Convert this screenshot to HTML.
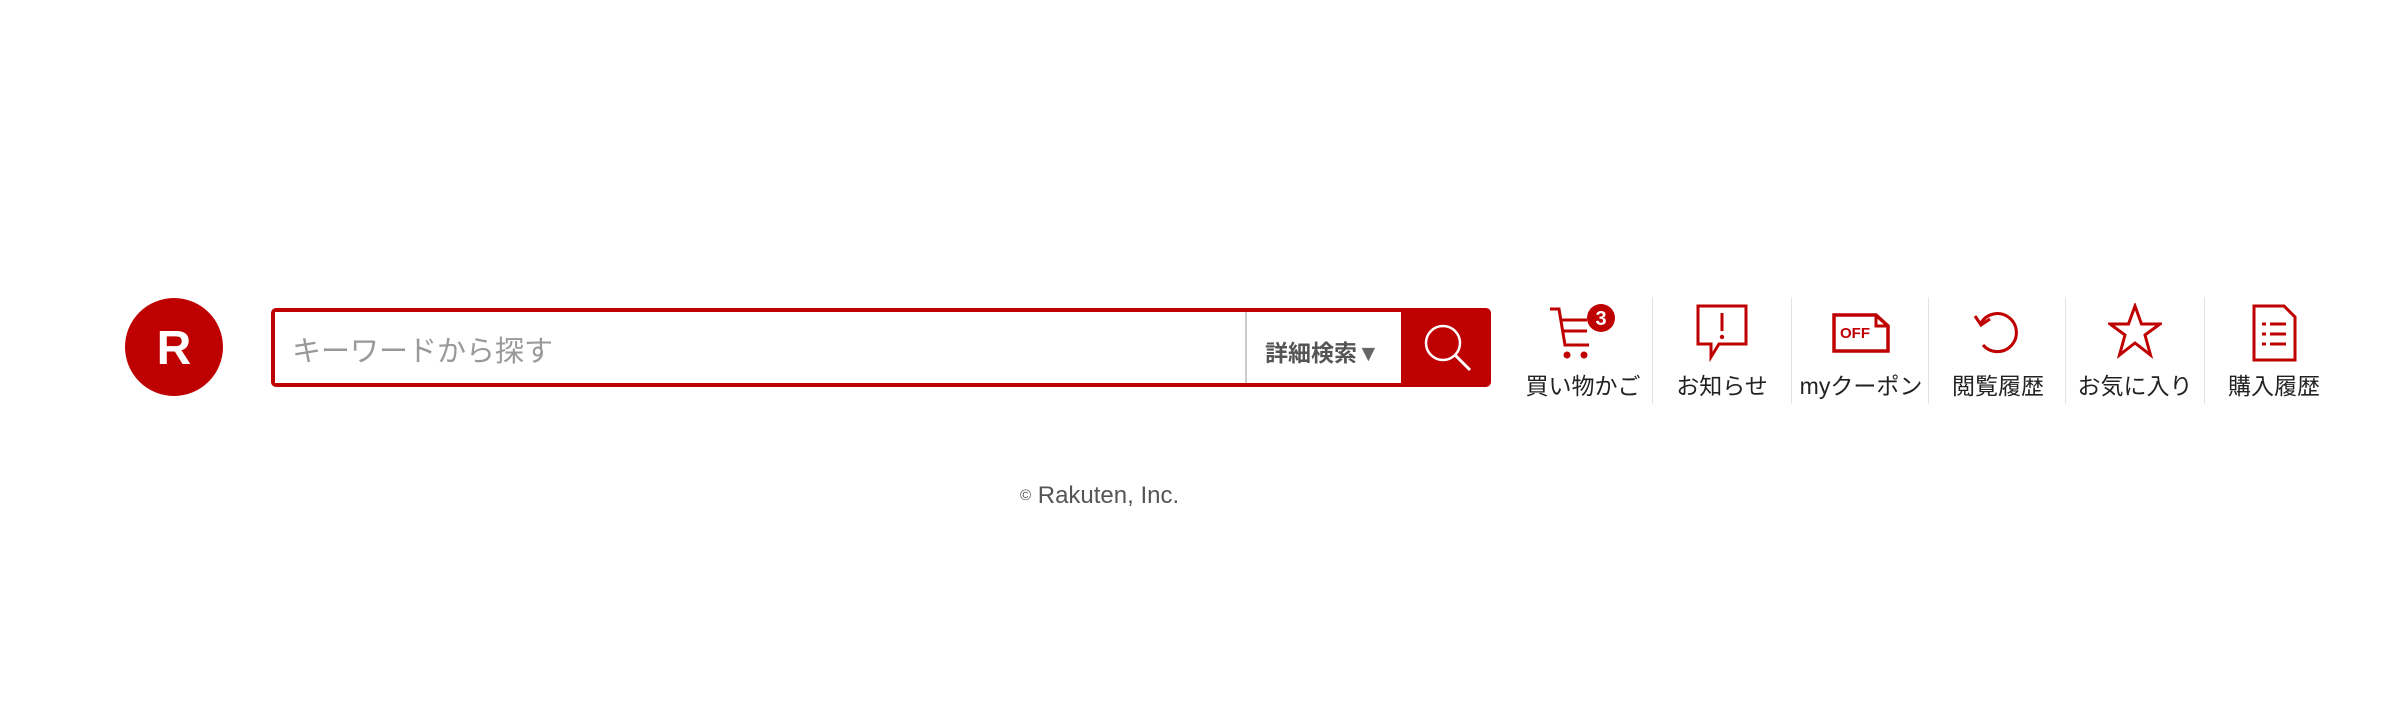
<!DOCTYPE html>
<html><head><meta charset="utf-8"><style>
body{margin:0;width:2390px;height:718px;background:#fff;position:relative;overflow:hidden;font-family:"Liberation Sans","Noto Sans CJK JP",sans-serif}
.a{position:absolute}
.item{position:absolute;top:297px;height:107px;width:138px;text-align:center}
.item svg{position:absolute;left:42px;top:6px}
.item span{position:absolute;left:0;right:0;top:70px;font-size:23px;color:#222;white-space:nowrap}
.div{position:absolute;top:297px;width:1px;height:107px;background:#e3e3e3}
</style></head><body>
<svg class="a" style="left:125px;top:298px" width="98" height="98" viewBox="0 0 98 98"><circle cx="49" cy="49" r="49" fill="#bf0000"/><text x="49" y="66" text-anchor="middle" font-family="Liberation Sans" font-weight="bold" font-size="48" fill="#fff">R</text></svg>
<div class="a" style="left:271px;top:308px;width:1220px;height:79px;background:#bf0000;border-radius:5px"></div>
<div class="a" style="left:275px;top:312px;width:970px;height:71px;background:#fff"></div>
<div class="a" style="left:292px;top:328px;font-size:29px;color:#999">キーワードから探す</div>
<div class="a" style="left:1245px;top:312px;width:156px;height:71px;background:#fff;border-left:2px solid #ccc;box-sizing:border-box"></div>
<div class="a" style="left:1265px;top:334px;font-size:23px;font-weight:bold;color:#555">詳細検索<span style="color:#666">▼</span></div>
<svg class="a" style="left:1420px;top:320px" width="56" height="56" viewBox="0 0 56 56"><circle cx="23" cy="23" r="17" fill="none" stroke="#fff" stroke-width="2.5"/><line x1="35" y1="35" x2="50" y2="50" stroke="#fff" stroke-width="3"/></svg>

<div class="item" style="left:1514px"><svg width="70" height="60" viewBox="0 0 70 60" style="left:34px"><path d="M2 6h9l6 36h24M13 17h26M15 28h24" fill="none" stroke="#bf0000" stroke-width="3"/><circle cx="19" cy="52" r="3.5" fill="#bf0000"/><circle cx="36" cy="52" r="3.5" fill="#bf0000"/><circle cx="53" cy="15" r="14" fill="#bf0000"/><text x="53" y="22" text-anchor="middle" font-size="20" font-weight="bold" fill="#fff" font-family="Liberation Sans">3</text></svg><span>買い物かご</span></div>
<div class="div" style="left:1652px"></div>
<div class="item" style="left:1653px"><svg width="54" height="60" viewBox="0 0 54 60"><path d="M3 3h48v38H24l-8 13V41H3z" fill="none" stroke="#bf0000" stroke-width="3"/><path d="M27 10v18" stroke="#bf0000" stroke-width="3"/><circle cx="27" cy="34" r="2.2" fill="#bf0000"/></svg><span>お知らせ</span></div>
<div class="div" style="left:1791px"></div>
<div class="item" style="left:1792px"><svg width="60" height="60" viewBox="0 0 60 60" style="left:39px"><path d="M3 12h42l12 11v25H3z" fill="none" stroke="#bf0000" stroke-width="3.5"/><path d="M45 12v11h12" fill="none" stroke="#bf0000" stroke-width="3"/><text x="9" y="35" font-size="15" font-weight="bold" fill="#bf0000" font-family="Liberation Sans">OFF</text></svg><span>myクーポン</span></div>
<div class="div" style="left:1928px"></div>
<div class="item" style="left:1929px"><svg width="54" height="60" viewBox="0 0 54 60"><path d="M10 20A19 19 0 1 1 12 42" fill="none" stroke="#bf0000" stroke-width="3"/><path d="M4 13l6 9 9-6" fill="none" stroke="#bf0000" stroke-width="3"/></svg><span>閲覧履歴</span></div>
<div class="div" style="left:2065px"></div>
<div class="item" style="left:2066px"><svg width="54" height="60" viewBox="0 0 54 60"><path d="M27 3l6.5 18H52L37 32l5.5 20L27 40 11.5 52 17 32 2 21h18.5z" fill="none" stroke="#bf0000" stroke-width="3"/></svg><span>お気に入り</span></div>
<div class="div" style="left:2204px"></div>
<div class="item" style="left:2205px"><svg width="54" height="60" viewBox="0 0 54 60"><path d="M7 3h30l11 11v43H7z" fill="none" stroke="#bf0000" stroke-width="3"/><path d="M15 21h4M23 21h16M15 31h4M23 31h16M15 41h4M23 41h16" stroke="#bf0000" stroke-width="3"/></svg><span>購入履歴</span></div>

<div class="a" style="left:1020px;top:482px;font-size:24px;color:#555"><span style="font-size:15px;vertical-align:3px">©</span> Rakuten, Inc.</div>
</body></html>
